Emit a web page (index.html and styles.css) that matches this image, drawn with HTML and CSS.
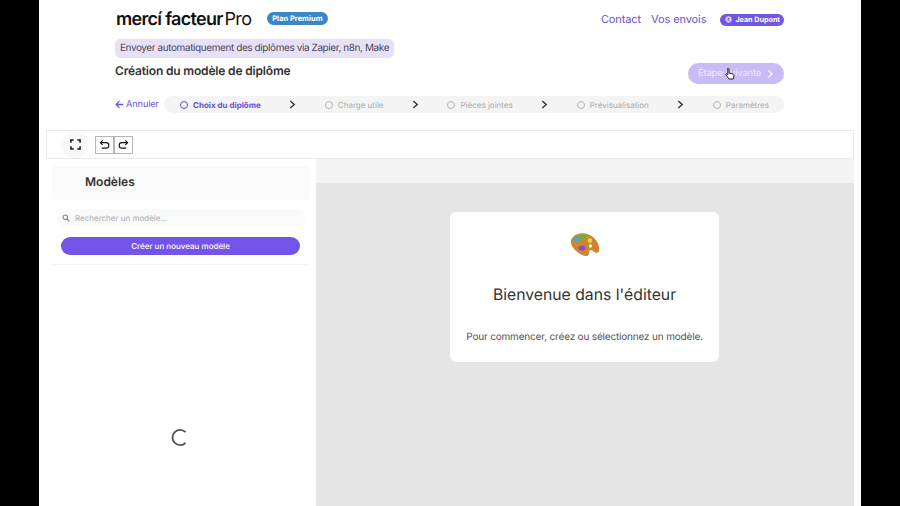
FILE: index.html
```html
<!DOCTYPE html>
<html lang="fr">
<head>
    <meta charset="UTF-8">
    <meta name="viewport" content="width=device-width, initial-scale=1.0">
    <title>Création du modèle de diplôme</title>
    <link rel="stylesheet" href="styles.css">
</head>
<body>
    <div class="page">
        <header class="top">
            <div class="top-row">
                <div class="brand">
                    <span class="logo">mercí facteur <span class="logo-pro">Pro</span></span>
                    <span class="plan">Plan Premium</span>
                </div>
                <nav class="nav">
                    <a>Contact</a>
                    <a>Vos envois</a>
                    <span class="user">
                        <svg class="user-icon" viewBox="0 0 10 10"><circle cx="5" cy="5" r="4.5" fill="#d9d0ff"/><circle cx="5" cy="3.9" r="1.5" fill="#7354e8"/><path d="M2.4 7.6c.6-1.3 4.6-1.3 5.2 0" stroke="#7354e8" fill="none"/></svg>
                        Jean Dupont
                    </span>
                </nav>
            </div>
            <div class="tag">Envoyer automatiquement des diplômes via Zapier, n8n, Make</div>
            <div class="title-row">
                <h1>Création du modèle de diplôme</h1>
                <button class="next">Étape suivante
                    <svg viewBox="0 0 10 12" class="next-icon"><path d="M3 1.5 7.5 6 3 10.5" fill="none" stroke="#fff" stroke-width="1.5"/></svg>
                </button>
            </div>
            <div class="steps-row">
                <a class="cancel">
                    <svg viewBox="0 0 12 12" class="cancel-icon"><path d="M11 6H2M6 1.5 1.5 6 6 10.5" fill="none" stroke="#6f52e6" stroke-width="1.8"/></svg>
                    Annuler
                </a>
                <div class="steps">
                    <span class="step active"><i class="dot"></i>Choix du diplôme</span>
                    <svg class="sep" viewBox="0 0 8 10"><path d="M1.5 1 6 5 1.5 9" fill="none" stroke="#333" stroke-width="1.6"/></svg>
                    <span class="step"><i class="dot"></i>Charge utile</span>
                    <svg class="sep" viewBox="0 0 8 10"><path d="M1.5 1 6 5 1.5 9" fill="none" stroke="#333" stroke-width="1.6"/></svg>
                    <span class="step"><i class="dot"></i>Pièces jointes</span>
                    <svg class="sep" viewBox="0 0 8 10"><path d="M1.5 1 6 5 1.5 9" fill="none" stroke="#333" stroke-width="1.6"/></svg>
                    <span class="step"><i class="dot"></i>Prévisualisation</span>
                    <svg class="sep" viewBox="0 0 8 10"><path d="M1.5 1 6 5 1.5 9" fill="none" stroke="#333" stroke-width="1.6"/></svg>
                    <span class="step"><i class="dot"></i>Paramètres</span>
                </div>
            </div>
        </header>

        <div class="toolbar">
            <button class="fullscreen">
                <svg viewBox="0 0 12 12"><path d="M1 4V1h3M8 1h3v3M11 8v3H8M4 11H1V8" fill="none" stroke="#111" stroke-width="1.6"/></svg>
            </button>
            <div class="history">
                <button class="hist-btn"><svg viewBox="0 0 12 12"><path d="M4 1.5 1.5 4 4 6.5M1.5 4h6.2a2.5 2.5 0 0 1 0 6H3" fill="none" stroke="#111" stroke-width="1.2"/></svg></button>
                <button class="hist-btn"><svg viewBox="0 0 12 12"><path d="M8 1.5 10.500 4 8 6.500M10.500 4H4.300a2.500 2.500 0 0 0 0 6H9" fill="none" stroke="#111" stroke-width="1.2"/></svg></button>
            </div>
        </div>

        <div class="editor">
            <aside class="sidebar">
                <div class="side-head">Modèles</div>
                <div class="search">
                    <svg viewBox="0 0 12 12"><circle cx="5" cy="5" r="3.400" fill="none" stroke="#888" stroke-width="1.600"/><path d="M7.500 7.500 11 11" stroke="#888" stroke-width="1.800"/></svg>
                    Rechercher un modèle...
                </div>
                <button class="create">Créer un nouveau modèle</button>
                <div class="side-list">
                    <svg class="spinner" viewBox="0 0 20 20"><path d="M16.400 4.400A8 8 0 1 0 16.400 15.600" fill="none" stroke="#555" stroke-width="2"/></svg>
                </div>
            </aside>
            <main class="canvas">
                <div class="canvas-strip"></div>
                <div class="canvas-body">
                    <div class="welcome">
                        <svg class="palette" viewBox="0 0 30 26">
                            <path d="M3 5C8 0 18 0 24 6c4 4 6 9 5 13-1 3-4 2-6 0-2-2-4-1-4 2 0 3-3 4-7 2C5 20-3 11 3 5z" fill="#c98a2e"/>
                            <ellipse cx="7" cy="7" rx="3.200" ry="2.600" fill="#4aa8d8"/>
                            <ellipse cx="13" cy="4.500" rx="2.800" ry="2.200" fill="#58b848"/>
                            <ellipse cx="20" cy="8.500" rx="2.200" ry="2.600" fill="#f0d040"/>
                            <ellipse cx="12" cy="16" rx="3.600" ry="2.600" fill="#9a46c8"/>
                            <ellipse cx="25" cy="15" rx="2.200" ry="3" fill="#e8743a"/>
                            <ellipse cx="20.500" cy="14" rx="1.500" ry="1.800" fill="#fff"/>
                        </svg>
                        <h2>Bienvenue dans l'éditeur</h2>
                        <p>Pour commencer, créez ou sélectionnez un modèle.</p>
                    </div>
                </div>
            </main>
        </div>

        <svg class="cursor" viewBox="0 0 12 14"><path d="M3.500 1.500c.8-.6 1.500 0 1.500.8V6l4 1c1 .3 1.300 1 1 2l-.8 3H5L2 8c-.5-.8.300-1.500 1-1l.8.6V2.300c0-.3-.1-.6-.3-.8z" fill="#fff" stroke="#222" stroke-width="1"/></svg>
    </div>
</body>
</html>
```
FILE: styles.css
```css
* {
    box-sizing: border-box;
}
html, body {
    margin: 0;
    height: 100%;
    background-color: #000;
    overflow: hidden;
}
body {
    font-family: Inter, "Liberation Sans", sans-serif;
    color: #333;
    text-rendering: geometricPrecision;
}
button {
    font-family: inherit;
    text-rendering: inherit;
    border: none;
    padding: 0;
}

.page {
    position: relative;
    width: 822px;
    height: 506px;
    margin: 0 auto;
    background-color: #fff;
    overflow: hidden;
}

/* Header */
.top {
    height: 130px;
    padding: 0 77px 0 76px;
}
.top-row {
    display: flex;
    justify-content: space-between;
    align-items: center;
    height: 39px;
}
.brand {
    display: flex;
    align-items: center;
    gap: 16px;
}
.logo {
    margin-top: -1px;
    padding-left: 1px;
    font-size: 18px;
    font-weight: 600;
    letter-spacing: -0.700px;
    color: #111;
    white-space: pre;
}
.logo-pro {
    margin-left: -2px;
    font-weight: 400;
}
.plan {
    font-size: 7.500px;
    font-weight: 700;
    color: #fff;
    background-color: #3a87c8;
    border-radius: 7px;
    padding: 2px 5px;
    margin-top: -3px;
}
.nav {
    display: flex;
    align-items: center;
    font-size: 11px;
    letter-spacing: -0.100px;
    color: #6a4fd8;
}
.nav a {
    margin: -2px 10px 0 0;
}
.user {
    display: flex;
    align-items: center;
    gap: 3px;
    margin-left: 4px;
    height: 12px;
    padding: 0 4px 0 5px;
    font-size: 7.200px;
    font-weight: 700;
    letter-spacing: 0;
    color: #fff;
    background-color: #7354e8;
    border-radius: 6px;
}
.user-icon {
    width: 7px;
    height: 7px;
}
.tag {
    width: fit-content;
    height: 19px;
    line-height: 19px;
    padding: 0 5px;
    font-size: 10px;
    letter-spacing: -0.410px;
    color: #4d4a58;
    background-color: #e7e1f8;
    border-radius: 5px;
}
.title-row {
    display: flex;
    justify-content: space-between;
    height: 38px;
}
h1 {
    margin: 5px 0 0;
    font-size: 12px;
    line-height: 16px;
    font-weight: 600;
    letter-spacing: -0.170px;
    color: #333;
}
.next {
    display: flex;
    align-items: center;
    justify-content: space-between;
    width: 96px;
    height: 21px;
    margin-top: 5px;
    padding: 0 10px;
    font-size: 9.500px;
    letter-spacing: -0.200px;
    white-space: nowrap;
    color: #efeaff;
    background-color: #c8bbf8;
    border-radius: 11px;
}
.next-icon {
    width: 8px;
    height: 10px;
}
.steps-row {
    display: flex;
    align-items: center;
    justify-content: space-between;
    height: 17px;
}
.cancel {
    display: flex;
    align-items: center;
    gap: 2px;
    font-size: 9.200px;
    letter-spacing: -0.100px;
    color: #6f52e6;
}
.cancel-icon {
    width: 9px;
    height: 9px;
}
.steps {
    display: flex;
    align-items: center;
    justify-content: space-between;
    width: 620px;
    height: 17px;
    padding: 0 15px 0 16px;
    background-color: #f4f4f4;
    border-radius: 9px;
}
.step {
    display: flex;
    align-items: center;
    gap: 5px;
    font-size: 8px;
    color: #aaa;
}
.step.active {
    font-weight: 700;
    color: #6a4fd8;
}
.dot {
    width: 8px;
    height: 8px;
    border: 1px solid #b5b5b5;
    border-radius: 50%;
}
.step.active .dot {
    border-color: #6a4fd8;
}
.sep {
    width: 7px;
    height: 9px;
}

/* Toolbar */
.toolbar {
    display: flex;
    align-items: center;
    gap: 6px;
    height: 29px;
    margin: 0 7px;
    padding-left: 14px;
    border: 1px solid #e9e9e9;
}
.fullscreen {
    display: flex;
    align-items: center;
    justify-content: center;
    width: 28px;
    height: 26px;
    background-color: #f8f8f8;
    border-radius: 50%;
}
.fullscreen svg {
    width: 11px;
    height: 11px;
}
.history {
    display: flex;
}
.hist-btn {
    display: flex;
    align-items: center;
    justify-content: center;
    width: 19px;
    height: 18px;
    background-color: #fff;
    border: 1.500px solid #b5b5b5;
}
.hist-btn svg {
    width: 11px;
    height: 11px;
}

/* Editor */
.editor {
    display: flex;
    height: 347px;
    margin: 0 7px;
}
.sidebar {
    display: flex;
    flex-direction: column;
    width: 270px;
    padding: 7px 6px 0;
}
.side-head {
    height: 34px;
    line-height: 32px;
    padding-left: 33px;
    font-size: 12px;
    font-weight: 600;
    color: #333;
    background-color: #fafafa;
    border-radius: 4px;
}
.search {
    display: flex;
    align-items: center;
    gap: 5px;
    height: 18px;
    margin: 9px 5px 0;
    padding-left: 5px;
    font-size: 8px;
    color: #aaa;
    background-color: #fafafa;
    border-radius: 9px;
}
.search svg {
    width: 8px;
    height: 8px;
}
.create {
    height: 18px;
    margin: 10px 10px 0 9px;
    font-size: 8px;
    font-weight: 500;
    color: #fff;
    background-color: #7354e8;
    border-radius: 9px;
}
.side-list {
    flex: 1;
    display: flex;
    justify-content: center;
    padding-top: 163px;
    padding-right: 3px;
    margin-top: 9px;
    border-top: 1px solid #f4f4f4;
}
.spinner {
    width: 19px;
    height: 19px;
}
.canvas {
    flex: 1;
    display: flex;
    flex-direction: column;
}
.canvas-strip {
    height: 24px;
    background-color: #f4f4f4;
}
.canvas-body {
    flex: 1;
    padding: 29px 0 0 134px;
    background-color: #e5e5e5;
}
.welcome {
    display: flex;
    flex-direction: column;
    align-items: center;
    width: 269px;
    height: 150px;
    padding-top: 20px;
    background-color: #fff;
    border-radius: 6px;
}
.palette {
    width: 30px;
    height: 26px;
}
h2 {
    margin: 27px 0 0;
    font-size: 15.750px;
    line-height: 20px;
    font-weight: 400;
    color: #333;
}
.welcome p {
    margin: 25px 0 0;
    font-size: 10px;
    line-height: 14px;
    letter-spacing: -0.180px;
    color: #555;
}

/* Pointer caught in the screenshot */
.cursor {
    position: absolute;
    left: 685px;
    top: 67px;
    width: 12px;
    height: 14px;
}
```
